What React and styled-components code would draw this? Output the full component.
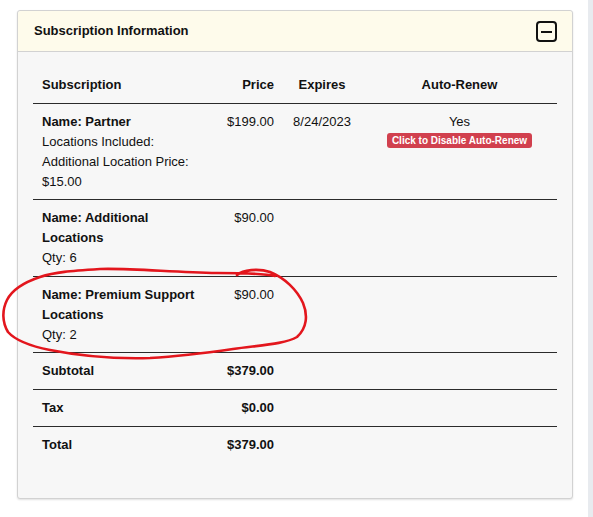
import React from "react";
import styled, { createGlobalStyle } from "styled-components";

const Global = createGlobalStyle`
  html, body { margin: 0; padding: 0; background: #ffffff; }
  body { font-family: "Liberation Sans", Arial, sans-serif; color: #111; }
`;

const Page = styled.div`
  display: flex;
  min-height: 517px;
`;

const Main = styled.div`
  flex: 0 0 588px;
  padding: 10px 0 0 17px;
  box-sizing: border-box;
`;

const SideStrip = styled.div`
  flex: 1;
  background: #e8ebef;
`;

const Panel = styled.section`
  position: relative;
  width: 556px;
  box-sizing: border-box;
  background: #f7f7f7;
  border: 1px solid #d2d2d2;
  border-radius: 3px;
  box-shadow: 0 1px 2px rgba(0, 0, 0, 0.12);
`;

const PanelHeader = styled.header`
  display: flex;
  align-items: center;
  justify-content: space-between;
  height: 40px;
  padding: 0 15px 0 16px;
  background: #fefbeb;
  border-bottom: 1px solid #d2d2d2;
  border-radius: 3px 3px 0 0;
`;

const Title = styled.h3`
  margin: 0;
  font-size: 13px;
  font-weight: bold;
  line-height: 20px;
  color: #111;
`;

const CollapseButton = styled.button`
  width: 21px;
  height: 21px;
  margin-top: 1px;
  padding: 0;
  border: 2px solid #111;
  border-radius: 4px;
  background: transparent;
  display: flex;
  align-items: center;
  justify-content: center;
  box-sizing: border-box;
  &::after {
    content: "";
    width: 11px;
    height: 2px;
    background: #111;
  }
`;

const PanelBody = styled.div`
  padding: 15px 15px 35px 15px;
`;

const Table = styled.table`
  width: 100%;
  border-collapse: collapse;
  table-layout: fixed;
  font-size: 13px;
  line-height: 20px;
`;

const Th = styled.th`
  box-sizing: border-box;
  font-weight: bold;
  text-align: ${(p) => p.$align || "left"};
  padding: 8px 8px 8px 9px;
  border-bottom: 1px solid #2b2b2b;
  width: ${(p) => p.$width || "auto"};
`;

const Td = styled.td`
  box-sizing: border-box;
  vertical-align: top;
  text-align: ${(p) => p.$align || "left"};
  padding: 8px 8px ${(p) => (p.$tight ? "7px" : "8px")} 9px;
  font-weight: ${(p) => (p.$bold ? "bold" : "normal")};
`;

const Tr = styled.tr`
  border-bottom: ${(p) => (p.$last ? "none" : "1px solid #2b2b2b")};
`;

const Strong = styled.strong`
  font-weight: bold;
`;

const Line = styled.div``;

const DangerBadge = styled.button`
  display: block;
  margin: 1px auto 0;
  padding: 0 5px;
  height: 15px;
  line-height: 15px;
  border: none;
  border-radius: 3px;
  background: #d1404e;
  color: #fff;
  font-family: "Liberation Sans", Arial, sans-serif;
  font-size: 10px;
  font-weight: bold;
  white-space: nowrap;
`;

const Annotation = styled.svg`
  position: absolute;
  left: -18px;
  top: -11px;
  width: 593px;
  height: 517px;
  pointer-events: none;
  overflow: visible;
`;

const items = [
  {
    name: "Partner",
    lines: ["Locations Included:", "Additional Location Price:", "$15.00"],
    price: "$199.00",
    expires: "8/24/2023",
    renew: true,
    tight: true,
  },
  { name: "Additional Locations", lines: ["Qty: 6"], price: "$90.00" },
  { name: "Premium Support Locations", lines: ["Qty: 2"], price: "$90.00", tight: true },
];

const totals = [
  { label: "Subtotal", value: "$379.00" },
  { label: "Tax", value: "$0.00" },
  { label: "Total", value: "$379.00" },
];

export default function App() {
  return (
    <>
      <Global />
      <Page>
        <Main>
          <Panel>
            <PanelHeader>
              <Title>Subscription Information</Title>
              <CollapseButton aria-label="Collapse" />
            </PanelHeader>
            <PanelBody>
              <Table>
                <thead>
                  <tr>
                    <Th $width="178px">Subscription</Th>
                    <Th $width="71px" $align="right">Price</Th>
                    <Th $width="79px" $align="center">Expires</Th>
                    <Th $align="center">Auto-Renew</Th>
                  </tr>
                </thead>
                <tbody>
                  {items.map((it) => (
                    <Tr key={it.name}>
                      <Td $tight={it.tight}>
                        <Strong>Name: {it.name}</Strong>
                        {it.lines.map((l) => (
                          <Line key={l}>{l}</Line>
                        ))}
                      </Td>
                      <Td $align="right">{it.price}</Td>
                      <Td $align="center">{it.expires || ""}</Td>
                      <Td $align="center">
                        {it.renew && (
                          <>
                            <Line>Yes</Line>
                            <DangerBadge>Click to Disable Auto-Renew</DangerBadge>
                          </>
                        )}
                      </Td>
                    </Tr>
                  ))}
                  {totals.map((t, i) => (
                    <Tr key={t.label} $last={i === totals.length - 1}>
                      <Td $bold>{t.label}</Td>
                      <Td $bold $align="right">{t.value}</Td>
                      <Td />
                      <Td />
                    </Tr>
                  ))}
                </tbody>
              </Table>
            </PanelBody>
            <Annotation viewBox="0 0 593 517">
              <path
                d="M237 275 C243 270 258 268 270 272 C285 278 297 290 303 303 C308 315 307 328 297 337 C285 344 262 345 233 349 C205 353 183 356 150 358 C115 359 80 356 50 350 C30 346 15 340 8 332 C2 322 2 310 7 300 C12 290 22 283 40 277 C55 272 70 271 100 269 C130 268 170 272 217 273 C240 273 262 273 275 276"
                fill="none"
                stroke="#e3161d"
                strokeWidth="2.6"
                strokeLinecap="round"
                strokeLinejoin="round"
              />
            </Annotation>
          </Panel>
        </Main>
        <SideStrip />
      </Page>
    </>
  );
}
